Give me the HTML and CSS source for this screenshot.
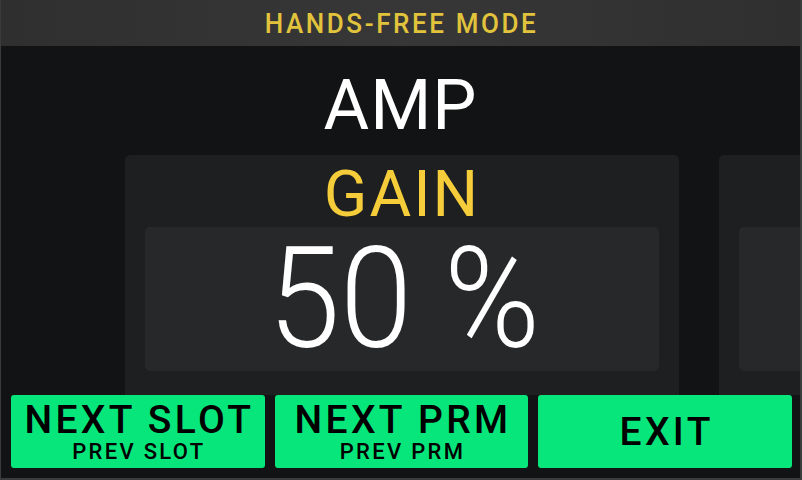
FILE: index.html
```html
<!DOCTYPE html>
<html>
<head>
<meta charset="utf-8">
<link rel="stylesheet" href="styles.css">
</head>
<body>
<div class="screen">
  <header class="topbar"><span class="topbar-title">HANDS-FREE MODE</span></header>
  <div class="block-name">AMP</div>
  <div class="cards">
    <div class="card">
      <div class="param-name">GAIN</div>
      <div class="param-value"><span class="value-text">50 %</span></div>
    </div>
    <div class="card">
      <div class="param-name"></div>
      <div class="param-value"></div>
    </div>
  </div>
  <div class="buttons">
    <div class="btn"><span class="btn-main">NEXT SLOT</span><span class="btn-sub">PREV SLOT</span></div>
    <div class="btn"><span class="btn-main">NEXT PRM</span><span class="btn-sub">PREV PRM</span></div>
    <div class="btn"><span class="btn-main">EXIT</span></div>
  </div>
</div>
</body>
</html>
```
FILE: styles.css
```css
html, body {
  margin: 0;
  padding: 0;
  background: #121314;
}
.screen {
  width: 802px;
  height: 480px;
  box-sizing: border-box;
  border-left: 1px solid #3a3b3c;
  border-right: 2px solid #3a3b3c;
  border-bottom: 2px solid #3a3b3c;
  background: #121314;
  display: flex;
  flex-direction: column;
  overflow: hidden;
  font-family: Roboto, "Liberation Sans", sans-serif;
}
.topbar {
  height: 46px;
  flex: none;
  background: linear-gradient(90deg, #2f2f30, #373737 50%, #2f2f30);
  display: flex;
  align-items: center;
  justify-content: center;
}
.topbar-title {
  color: #e2c43c;
  font-size: 26px;
  font-weight: 500;
  letter-spacing: 2.6px;
  line-height: 1;
  padding-left: 2px;
  display: inline-block;
  transform: scaleY(1.06);
}
.block-name {
  color: #ffffff;
  font-size: 70px;
  line-height: 70px;
  text-align: center;
  margin-top: 24px;
  height: 85px;
  letter-spacing: 1px;
}
.cards {
  display: flex;
  gap: 40px;
  padding-left: 124px;
  height: 240px;
  flex: none;
}
.card {
  flex: none;
  width: 554px;
  background: #1e1f21;
  border-radius: 5px 5px 0 0;
  box-sizing: border-box;
  padding: 0 20px;
  display: flex;
  flex-direction: column;
}
.param-name {
  color: #f5cd3a;
  font-size: 64px;
  line-height: 60px;
  height: 72px;
  text-align: center;
  letter-spacing: 2px;
  padding-top: 10px;
  box-sizing: border-box;
}
.param-value {
  height: 144px;
  background: #27282a;
  border-radius: 5px;
  color: #ffffff;
  font-weight: 300;
  font-size: 130px;
  display: flex;
  align-items: center;
  justify-content: center;
}
.value-text {
  display: inline-block;
  line-height: 120px;
  transform: scaleY(1.09);
  padding-left: 4px;
  margin-top: -1px;
}
.buttons {
  display: flex;
  gap: 10px;
  padding: 0 8px 0 10px;
  height: 73px;
  flex: none;
}
.btn {
  flex: 1;
  background: #07e67a;
  border-radius: 3px;
  display: flex;
  flex-direction: column;
  align-items: center;
  justify-content: center;
  color: #000;
  font-weight: 500;
}
.btn-main {
  font-size: 39px;
  line-height: 40px;
  letter-spacing: 3.3px;
  padding-left: 3px;
}
.btn-sub {
  font-size: 22px;
  line-height: 22px;
  letter-spacing: 2.3px;
  margin-top: 1px;
  padding-left: 2px;
}
```
